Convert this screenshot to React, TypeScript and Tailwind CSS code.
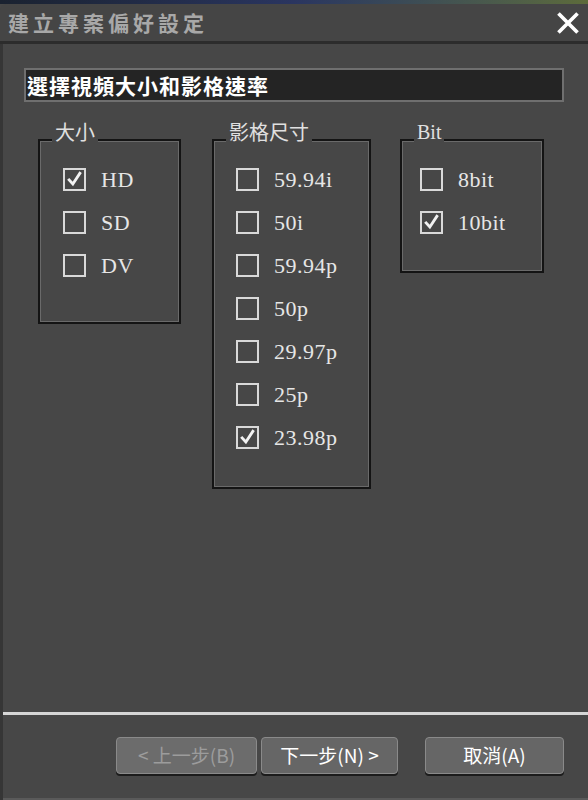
import React from 'react'

const serif = { fontFamily: '"Liberation Serif", "Noto Sans CJK TC", serif' }
const sans = { fontFamily: '"Noto Sans CJK TC", "Liberation Sans", sans-serif' }

interface Option {
  label: string
  checked?: boolean
}

function CheckMark() {
  return (
    <svg viewBox="0 0 23 23" className="absolute inset-0 h-full w-full">
      <path d="M5 12 L9.5 17 L18 4" fill="none" stroke="#f2f2f2" strokeWidth="3.4" strokeLinecap="square" />
    </svg>
  )
}

function CheckRow({ option, boxLeft }: { option: Option; boxLeft: string }) {
  return (
    <div className={`flex h-[43px] items-center ${boxLeft}`}>
      <div className="relative h-[23px] w-[23px] shrink-0 border-2 border-[#d9d9d9]">
        {option.checked && <CheckMark />}
      </div>
      <span className="ml-[15px] text-[22px] leading-none tracking-[0.5px] text-[#e6e6e6]" style={serif}>
        {option.label}
      </span>
    </div>
  )
}

function Group({
  title,
  options,
  className,
  boxLeft,
  titleFont,
}: {
  title: string
  options: Option[]
  className: string
  boxLeft: string
  titleFont: React.CSSProperties
}) {
  return (
    <div
      className={`relative shrink-0 border-2 border-[#141414] shadow-[inset_0_0_0_1px_#6a6a6a] pt-[17px] ${className}`}
    >
      <span
        className="absolute left-[12px] top-[-22px] bg-[#474747] px-[3px] text-[20px] leading-[26px] text-[#e0e0e0]"
        style={titleFont}
      >
        {title}
      </span>
      {options.map((o) => (
        <CheckRow key={o.label} option={o} boxLeft={boxLeft} />
      ))}
    </div>
  )
}

export default function App() {
  const sizes: Option[] = [{ label: 'HD', checked: true }, { label: 'SD' }, { label: 'DV' }]
  const frames: Option[] = [
    { label: '59.94i' },
    { label: '50i' },
    { label: '59.94p' },
    { label: '50p' },
    { label: '29.97p' },
    { label: '25p' },
    { label: '23.98p', checked: true },
  ]
  const bits: Option[] = [{ label: '8bit' }, { label: '10bit', checked: true }]

  return (
    <div className="flex h-[800px] w-[588px] flex-col overflow-hidden bg-[#474747]" style={sans}>
      {/* desktop strip above the dialog */}
      <div className="h-[4px] shrink-0 bg-gradient-to-r from-[#1a2230] via-[#2a3560] to-[#5d6b3a]" />

      {/* title bar */}
      <div className="flex h-[37px] shrink-0 items-center justify-between rounded-tl-[6px] bg-[#454545] pl-[8px] pr-[8px]">
        <span className="text-[21px] font-bold tracking-[4px] text-[#a8a8a8]">建立專案偏好設定</span>
        <svg viewBox="0 0 24 24" className="h-[22px] w-[24px]">
          <path d="M3 3 L21 21 M21 3 L3 21" stroke="#ffffff" strokeWidth="4" strokeLinecap="square" />
        </svg>
      </div>
      <div className="h-[3px] shrink-0 bg-[#2c2c2c]" />

      {/* body */}
      <div className="flex flex-1 flex-col border-l-[3px] border-[#363636]">
        <div className="ml-[21px] mt-[24px] flex h-[34px] w-[540px] items-center border-2 border-[#6f6f6f] bg-[#242424] pl-[1px]">
          <span className="text-[21px] font-bold leading-none tracking-[1px] text-white">選擇視頻大小和影格速率</span>
        </div>

        <div className="mt-[37px] flex items-start">
          <Group title="大小" options={sizes} className="ml-[35px] h-[185px] w-[143px]" boxLeft="pl-[23px]" titleFont={sans} />
          <Group title="影格尺寸" options={frames} className="ml-[31px] h-[350px] w-[159px]" boxLeft="pl-[22px]" titleFont={sans} />
          <Group title="Bit" options={bits} className="ml-[29px] h-[134px] w-[144px]" boxLeft="pl-[18px]" titleFont={serif} />
        </div>

        <div className="flex-1" />

        <div className="h-[3px] bg-[#d6d6d6]" />

        <div className="mt-[22px] flex">
          <button className="ml-[113px] h-[37px] w-[141px] rounded-[4px] border border-[#8a8a8a] bg-[#6c6c6c] text-[19px] text-[#9c9c9c] shadow-[0_2px_0_#1c1c1c]">
            &lt; 上一步(B)
          </button>
          <button className="ml-[4px] h-[37px] w-[137px] rounded-[4px] border border-[#8a8a8a] bg-[#666666] text-[19px] text-white shadow-[0_2px_0_#1c1c1c]">
            下一步(N) &gt;
          </button>
          <button className="ml-[27px] h-[37px] w-[139px] rounded-[4px] border border-[#8a8a8a] bg-[#666666] text-[19px] text-white shadow-[0_2px_0_#1c1c1c]">
            取消(A)
          </button>
        </div>

        <div className="h-[24px]" />
        <div className="h-[2px] bg-[#5a5a5a]" />
      </div>
    </div>
  )
}
